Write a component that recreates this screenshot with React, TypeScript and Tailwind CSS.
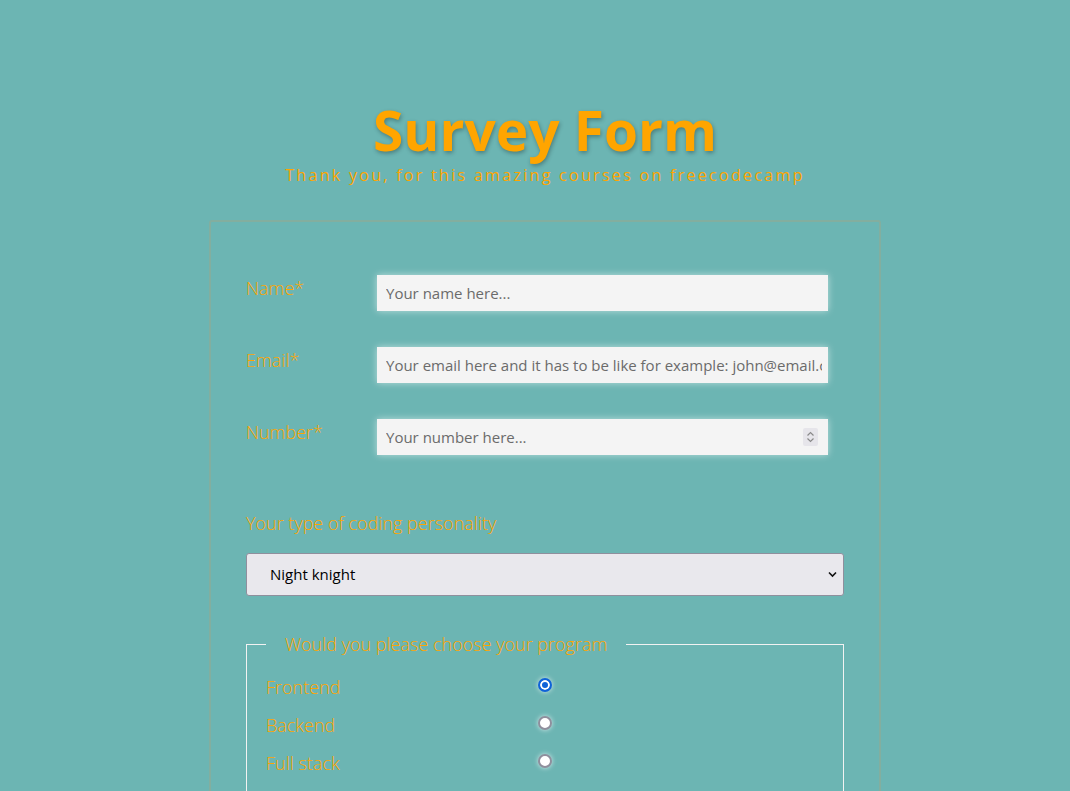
import React, { useState } from 'react';

const font = "font-['Segoe_UI','Open_Sans','Noto_Sans',sans-serif]";

const TextRow: React.FC<{ label: string; type: string; placeholder: string; spinner?: boolean }> = ({
  label,
  type,
  placeholder,
  spinner,
}) => (
  <div className="flex items-start">
    <label className="w-[131px] pt-[1px] text-[18px] font-[350] leading-[24px] text-[#ffa500]">{label}</label>
    <div className="relative">
      <input
        type={type}
        placeholder={placeholder}
        className={`h-[36px] w-[451px] bg-[#f4f4f4] pl-[9px] text-[15px] text-[#333] shadow-[0_0_7px_rgba(255,255,255,0.55)] outline-none placeholder:text-[#6b6b6b] [appearance:textfield] [&::-webkit-inner-spin-button]:appearance-none ${spinner ? 'pr-[34px]' : 'pr-[6px]'}`}
      />
      {spinner && (
        <span className="absolute right-[10px] top-[9px] flex h-[18px] w-[15px] items-center justify-center rounded-[2px] bg-[#e6e5ea]">
          <svg width="9" height="12" viewBox="0 0 9 12" fill="none" stroke="#8a8a8a" strokeWidth="1.2">
            <path d="M1.5 4.5 4.5 1.5 7.5 4.5" />
            <path d="M1.5 7.5 4.5 10.5 7.5 7.5" />
          </svg>
        </span>
      )}
    </div>
  </div>
);

export default function App() {
  const [program, setProgram] = useState('frontend');
  const [persona, setPersona] = useState('night');

  return (
    <div className={`min-h-screen bg-[#6cb5b3] pl-[20px] ${font}`}>
      <header className="pt-[102px] text-center">
        <h1 className="text-[55px] font-bold leading-[56px] text-[#ffa500] [text-shadow:1px_2px_4px_rgba(0,0,0,0.3)]">
          Survey Form
        </h1>
        <p className="mt-[5px] text-[16px] font-normal tracking-[2.3px] text-[#ffa500]">
          Thank you, for this amazing courses on freecodecamp
        </p>
      </header>

      <form className="mx-auto mt-[33px] w-[672px] rounded-[3px] border-2 border-[#83ae9f] px-[35px] pt-[53px] pb-10">
        <div className="flex flex-col gap-[36px]">
          <TextRow label="Name*" type="text" placeholder="Your name here..." />
          <TextRow
            label="Email*"
            type="email"
            placeholder="Your email here and it has to be like for example: john@email.com"
          />
          <TextRow label="Number*" type="number" placeholder="Your number here..." spinner />
        </div>

        <p className="mt-[55px] text-[18px] font-[350] text-[#ffa500]">Your type of coding personality</p>
        <div className="relative mt-[16px]">
          <select
            value={persona}
            onChange={(e) => setPersona(e.target.value)}
            className="h-[43px] w-full appearance-none rounded-[3px] border border-[#8f8f9d] bg-[#e9e8ed] pl-[23px] text-[15px] text-black outline-none"
          >
            <option value="night">Night knight</option>
            <option value="early">Early bird</option>
            <option value="lazy">Lazy coder</option>
          </select>
          <svg
            className="pointer-events-none absolute right-[7px] top-[18px]"
            width="9"
            height="7"
            viewBox="0 0 9 7"
            fill="none"
            stroke="#111"
            strokeWidth="1.6"
          >
            <path d="M1 1.5 4.5 5 8 1.5" />
          </svg>
        </div>

        <fieldset className="mt-[35px] border border-[#f2f2f2] px-[19px] pb-10">
          <legend className="px-[19px] text-[18px] font-[350] text-[#ffa500]">
            Would you please choose your program
          </legend>
          <div className="flex flex-col gap-[14px] pt-[17px]">
            {[
              ['frontend', 'Frontend'],
              ['backend', 'Backend'],
              ['fullstack', 'Full stack'],
            ].map(([value, text]) => (
              <label key={value} className="flex h-[24px] items-center text-[18px] font-[350] text-[#ffa500]">
                <span className="w-[272px]">{text}</span>
                <input
                  type="radio"
                  name="program"
                  value={value}
                  checked={program === value}
                  onChange={() => setProgram(value)}
                  className="mt-[-4px] h-[14px] w-[14px] appearance-none rounded-full border-2 border-[#8f8f9d] bg-white shadow-[0_0_5px_rgba(255,255,255,0.7)] checked:border-[#0f62d8] checked:bg-[#0f62d8] checked:shadow-[inset_0_0_0_2px_#fff,0_0_5px_rgba(255,255,255,0.7)]"
                />
              </label>
            ))}
          </div>
        </fieldset>
      </form>
    </div>
  );
}
